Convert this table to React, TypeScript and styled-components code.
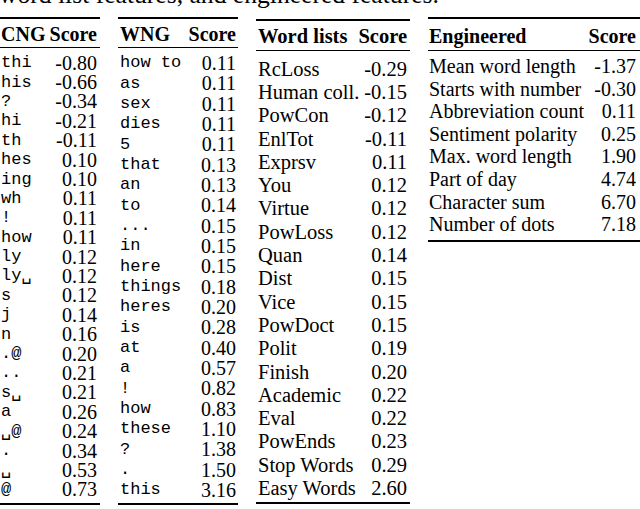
import React from 'react';
import styled, { createGlobalStyle } from 'styled-components';

const Global = createGlobalStyle`
  html, body { margin: 0; padding: 0; background: #fff; }
  body {
    width: 640px;
    height: 509px;
    overflow: hidden;
    font-family: "Liberation Serif", "Times New Roman", serif;
    color: #000;
  }
`;

const Page = styled.div`
  display: flex;
  flex-direction: column;
  width: 640px;
  height: 509px;
  overflow: hidden;
`;

const Caption = styled.p`
  margin: -14px 0 0 -1px;
  height: 31px;
  font-size: 25.6px;
  line-height: 17px;
  white-space: nowrap;
`;

const Tables = styled.div`
  display: flex;
  align-items: flex-start;
  gap: 18px;
`;

const Table = styled.div<{ $w: number; $top: number; $fs: number; $pl: number; $pr: number }>`
  --pl: ${(p) => p.$pl}px;
  --pr: ${(p) => p.$pr}px;
  flex: none;
  width: ${(p) => p.$w}px;
  margin-top: ${(p) => p.$top}px;
  border-top: 2px solid #000;
  border-bottom: 2px solid #000;
  font-size: ${(p) => p.$fs}px;
`;

const Head = styled.div<{ $h: number }>`
  box-sizing: border-box;
  display: flex;
  justify-content: space-between;
  align-items: center;
  height: ${(p) => p.$h}px;
  padding: 2px var(--pr) 0 var(--pl);
  border-bottom: 1px solid #000;
  font-weight: 700;
  line-height: 1;
  white-space: nowrap;
`;

const Body = styled.div<{ $pt: number; $pb: number }>`
  display: flex;
  flex-direction: column;
  padding: ${(p) => p.$pt}px 0 ${(p) => p.$pb}px;
`;

const Row = styled.div<{ $h: number }>`
  display: flex;
  justify-content: space-between;
  align-items: center;
  height: ${(p) => p.$h}px;
  padding: 0 var(--pr) 0 var(--pl);
  line-height: 1;
  white-space: pre;
`;

const Label = styled.span<{ $mono?: boolean }>`
  font-family: ${(p) =>
    p.$mono ? '"Liberation Mono", "DejaVu Sans Mono", monospace' : 'inherit'};
  font-size: ${(p) => (p.$mono ? '17px' : 'inherit')};
`;

const Num = styled.span`
  text-align: right;
`;

type Spec = {
  head: string;
  mono?: boolean;
  w: number;
  top: number;
  fs: number;
  pl: number;
  pr: number;
  headH: number;
  rowH: number;
  pt: number;
  pb: number;
  rows: [string, string][];
};

const tables: Spec[] = [
  {
    head: 'CNG',
    mono: true,
    w: 100,
    top: 0,
    fs: 20,
    pl: 1,
    pr: 3,
    headH: 29,
    rowH: 19.4,
    pt: 5,
    pb: 4,
    rows: [
      ['thi', '-0.80'],
      ['his', '-0.66'],
      ['?', '-0.34'],
      ['hi', '-0.21'],
      ['th', '-0.11'],
      ['hes', '0.10'],
      ['ing', '0.10'],
      ['wh', '0.11'],
      ['!', '0.11'],
      ['how', '0.11'],
      ['ly', '0.12'],
      ['ly\u2423', '0.12'],
      ['s', '0.12'],
      ['j', '0.14'],
      ['n', '0.16'],
      ['.@', '0.20'],
      ['..', '0.21'],
      ['s\u2423', '0.21'],
      ['a', '0.26'],
      ['\u2423@', '0.24'],
      ['.', '0.34'],
      ['\u2423', '0.53'],
      ['@', '0.73'],
    ],
  },
  {
    head: 'WNG',
    mono: true,
    w: 120,
    top: 0,
    fs: 20,
    pl: 2,
    pr: 2,
    headH: 29,
    rowH: 20.33,
    pt: 4.8,
    pb: 3,
    rows: [
      ['how to', '0.11'],
      ['as', '0.11'],
      ['sex', '0.11'],
      ['dies', '0.11'],
      ['5', '0.11'],
      ['that', '0.13'],
      ['an', '0.13'],
      ['to', '0.14'],
      ['...', '0.15'],
      ['in', '0.15'],
      ['here', '0.15'],
      ['things', '0.18'],
      ['heres', '0.20'],
      ['is', '0.28'],
      ['at', '0.40'],
      ['a', '0.57'],
      ['!', '0.82'],
      ['how', '0.83'],
      ['these', '1.10'],
      ['?', '1.38'],
      ['.', '1.50'],
      ['this', '3.16'],
    ],
  },
  {
    head: 'Word lists',
    w: 154,
    top: 2,
    fs: 20.5,
    pl: 2,
    pr: 3,
    headH: 30,
    rowH: 23.3,
    pt: 6.3,
    pb: 2,
    rows: [
      ['RcLoss', '-0.29'],
      ['Human coll.', '-0.15'],
      ['PowCon', '-0.12'],
      ['EnlTot', '-0.11'],
      ['Exprsv', '0.11'],
      ['You', '0.12'],
      ['Virtue', '0.12'],
      ['PowLoss', '0.12'],
      ['Quan', '0.14'],
      ['Dist', '0.15'],
      ['Vice', '0.15'],
      ['PowDoct', '0.15'],
      ['Polit', '0.19'],
      ['Finish', '0.20'],
      ['Academic', '0.22'],
      ['Eval', '0.22'],
      ['PowEnds', '0.23'],
      ['Stop Words', '0.29'],
      ['Easy Words', '2.60'],
    ],
  },
  {
    head: 'Engineered',
    w: 214,
    top: 0,
    fs: 20,
    pl: 1,
    pr: 6,
    headH: 32,
    rowH: 22.6,
    pt: 3.7,
    pb: 5,
    rows: [
      ['Mean word length', '-1.37'],
      ['Starts with number', '-0.30'],
      ['Abbreviation count', '0.11'],
      ['Sentiment polarity', '0.25'],
      ['Max. word length', '1.90'],
      ['Part of day', '4.74'],
      ['Character sum', '6.70'],
      ['Number of dots', '7.18'],
    ],
  },
];

export default function App() {
  return (
    <>
      <Global />
      <Page>
        <Caption>word list features, and engineered features.</Caption>
        <Tables>
          {tables.map((t) => (
            <Table key={t.head} $w={t.w} $top={t.top} $fs={t.fs} $pl={t.pl} $pr={t.pr}>
              <Head $h={t.headH}>
                <span>{t.head}</span>
                <span>Score</span>
              </Head>
              <Body $pt={t.pt} $pb={t.pb}>
                {t.rows.map(([label, score], i) => (
                  <Row key={i} $h={t.rowH}>
                    <Label $mono={t.mono}>{label}</Label>
                    <Num>{score}</Num>
                  </Row>
                ))}
              </Body>
            </Table>
          ))}
        </Tables>
      </Page>
    </>
  );
}
